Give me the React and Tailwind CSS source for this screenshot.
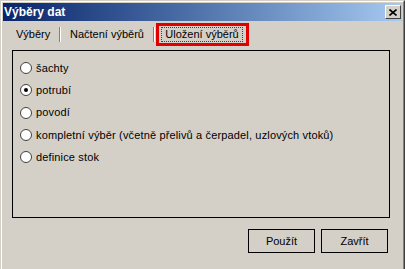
import React from "react";

const font = { fontFamily: '"Liberation Sans", Arial, sans-serif' };

function Radio({ checked }) {
  return (
    <svg width="12" height="12" viewBox="0 0 12 12" className="shrink-0">
      <circle cx="6" cy="6" r="5.5" fill="#ffffff" stroke="#404040" strokeWidth="1" />
      {checked && <circle cx="6" cy="6" r="2" fill="#000000" />}
    </svg>
  );
}

const options = [
  { label: "šachty", checked: false },
  { label: "potrubí", checked: true },
  { label: "povodí", checked: false },
  { label: "kompletní výběr (včetně přelivů a čerpadel, uzlových vtoků)", checked: false },
  { label: "definice stok", checked: false },
];

export default function App() {
  return (
    <div
      className="w-[405px] h-[269px] overflow-hidden bg-[#d4d0c8] border-l border-t border-r border-l-[#d4d0c8] border-t-[#d4d0c8] border-r-[#404040] text-[11px] text-black"
      style={font}
    >
      <div className="h-full border-l border-t border-r border-l-white border-t-white border-r-[#808080] p-px flex flex-col">
        {/* Title bar */}
        <div className="h-[18px] shrink-0 flex items-center justify-between pl-[1px] pr-[1px] bg-gradient-to-r from-[#0a246a] to-[#a6caf0]">
          <span className="text-white font-bold text-[12px] leading-none">Výběry dat</span>
          <div className="w-[16px] h-[14px] bg-[#d4d0c8] border border-t-white border-l-white border-r-[#404040] border-b-[#404040] flex items-center justify-center">
            <svg width="8" height="7" viewBox="0 0 8 7">
              <path d="M0.5 0.5 L7.5 6.5 M7.5 0.5 L0.5 6.5" stroke="#000" strokeWidth="1.6" />
            </svg>
          </div>
        </div>

        {/* Tabs */}
        <div className="mt-[2px] h-[23px] shrink-0 flex items-stretch">
          <div className="ml-[13px] w-[43px] flex items-center">Výběry</div>
          <div className="self-center w-[2px] h-[15px] border-l border-r border-l-[#808080] border-r-white" />
          <div className="w-[92px] pl-[9px] flex items-center">Načtení výběrů</div>
          <div className="self-center w-[2px] h-[15px] border-l border-r border-l-[#808080] border-r-white" />
          <div className="ml-[1px] w-[93px] border-[3px] border-[#e00000] bg-[#d4d0c8] flex items-center">
            <div className="ml-[2px] w-[82px] h-[15px] border border-dotted border-[#404040] flex items-center justify-center">
              Uložení výběrů
            </div>
          </div>
        </div>

        {/* Panel */}
        <div className="mt-[4px] ml-[9px] w-[378px] h-[168px] shrink-0 border border-black pt-[6px] pl-[7px] flex flex-col">
          {options.map((o) => (
            <div key={o.label} className="h-[22.3px] flex items-center gap-[4px]">
              <Radio checked={o.checked} />
              <span className="leading-none tracking-[0.15px]">{o.label}</span>
            </div>
          ))}
        </div>

        {/* Buttons */}
        <div className="mt-[11px] mr-[14px] flex justify-end gap-[6px]">
          <div className="w-[67px] h-[24px] border border-black flex items-center justify-center">Použít</div>
          <div className="w-[67px] h-[24px] border border-black flex items-center justify-center">Zavřít</div>
        </div>
      </div>
    </div>
  );
}
